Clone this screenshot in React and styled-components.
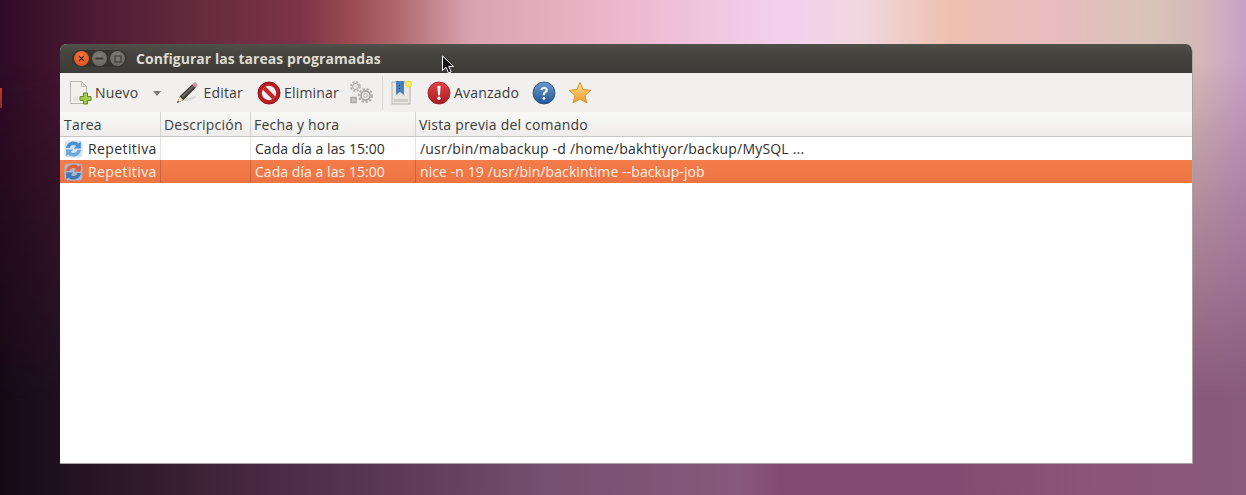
import React from "react";
import styled, { createGlobalStyle } from "styled-components";

const GlobalStyle = createGlobalStyle`
  html, body {
    margin: 0;
    padding: 0;
    height: 100%;
    overflow: hidden;
  }
  body {
    font-family: "Open Sans", "Noto Sans", sans-serif;
  }
`;

const Desktop = styled.div`
  position: relative;
  isolation: isolate;
  box-sizing: border-box;
  width: 1246px;
  height: 495px;
  padding: 44px 53px 31px 60px;
  overflow: hidden;
  background: linear-gradient(
    90deg,
    #160a14 0,
    #1f1020 60px,
    #3d2238 200px,
    #5c3a58 400px,
    #765070 550px,
    #88597c 740px,
    #824a72 780px,
    #824c72 950px,
    #8c5678 1100px,
    #885a7c 1246px
  );

  /* the lighter top of the wallpaper fades into the darker bottom */
  &::before {
    content: "";
    position: absolute;
    inset: 0;
    z-index: -1;
    background: linear-gradient(
      90deg,
      #2f0a26 0,
      #4f1c33 100px,
      #672b3e 200px,
      #7c3349 300px,
      #9a4a50 350px,
      #b06a70 400px,
      #d9a3b0 470px,
      #ecb5c8 600px,
      #f3d0ee 780px,
      #f0d8e0 860px,
      #eec0b0 950px,
      #e8bcc0 1050px,
      #d8c4b8 1150px,
      #d4b8b8 1200px,
      #c8a0c8 1246px
    );
    mask-image: linear-gradient(180deg, #000 60px, rgba(0, 0, 0, 0.55) 200px, transparent 400px);
  }
`;

const LeftSliver = styled.div`
  position: absolute;
  left: 0;
  top: 88px;
  width: 2px;
  height: 20px;
  background: linear-gradient(180deg, #c8381f, #8a2a2a);
`;

const Window = styled.div`
  display: flex;
  flex-direction: column;
  height: 100%;
  box-sizing: border-box;
  border-radius: 7px 7px 0 0;
  border-right: 1px solid #a8a5a3;
  border-bottom: 1px solid #a8a5a3;
  overflow: hidden;
  background: #ffffff;
`;

const TitleBar = styled.div`
  display: flex;
  align-items: center;
  flex: 0 0 29px;
  padding: 0 0 0 12px;
  background: linear-gradient(180deg, #514f49 0%, #45443e 35%, #3c3b37 100%);
`;

const WindowButtons = styled.div`
  display: flex;
  align-items: center;
  gap: 3px;
  padding: 1px 2px;
  border-radius: 9px;
  background: #35342f;
`;

const WinButton = styled.div`
  display: flex;
  align-items: center;
  justify-content: center;
  width: 15px;
  height: 15px;
  border-radius: 50%;
  background: ${(p) =>
    p.$close
      ? "radial-gradient(circle at 50% 35%, #f47a45, #dd4814)"
      : "radial-gradient(circle at 50% 35%, #7f7d76, #63615b)"};
`;

const Title = styled.span`
  margin-left: 9px;
  font-size: 14px;
  font-weight: 700;
  color: #dfdbd2;
  letter-spacing: 0.05px;
`;

const Toolbar = styled.div`
  display: flex;
  align-items: center;
  flex: 0 0 39px;
  padding-left: 9px;
  background: #f1f0ee;
`;

const ToolItem = styled.div`
  display: flex;
  align-items: center;
  flex: 0 0 auto;
  margin-left: ${(p) => p.$ml || 0}px;
  font-size: 14px;
  color: #3c3c3c;
`;

const ToolLabel = styled.span`
  margin-left: ${(p) => p.$ml || 2}px;
  letter-spacing: 0.2px;
`;

const Arrow = styled.div`
  width: 0;
  height: 0;
  margin-left: 15px;
  margin-top: 2px;
  border-left: 4.5px solid transparent;
  border-right: 4.5px solid transparent;
  border-top: 5px solid #7b7a76;
`;

const ToolSep = styled.div`
  width: 1px;
  height: 34px;
  margin-left: 8px;
  background: #dcdad6;
`;

const TableHead = styled.div`
  display: grid;
  grid-template-columns: 101px 90px 165px 1fr;
  flex: 0 0 25px;
  box-sizing: border-box;
  background: linear-gradient(180deg, #f8f8f7, #eeedeb);
  border-bottom: 1px solid #c9c7c3;
`;

const HeadCell = styled.div`
  display: flex;
  align-items: center;
  padding-left: 3px;
  font-size: 14px;
  color: #3c3c3c;
  letter-spacing: 0.2px;
  white-space: nowrap;
  border-right: 1px solid #d5d3cf;
  &:first-child {
    padding-left: 4px;
  }
  &:last-child {
    border-right: 0;
  }
`;

const Row = styled.div`
  display: grid;
  grid-template-columns: 101px 90px 165px 1fr;
  flex: 0 0 23px;
  background: ${(p) => (p.$selected ? "linear-gradient(180deg, #f47c4b, #ee7342)" : "#ffffff")};
  color: ${(p) => (p.$selected ? "#fdf0e8" : "#2e2e2e")};
`;

const Cell = styled.div`
  display: flex;
  align-items: center;
  padding-left: 4px;
  font-size: 14px;
  letter-spacing: ${(p) => p.$track ?? 0.2}px;
  white-space: nowrap;
  overflow: hidden;
  border-right: 1px solid ${(p) => (p.$selected ? "#c8653b" : "#e4e3e0")};
  &:last-child {
    border-right: 0;
  }
`;

const TaskName = styled.span`
  margin-left: 5px;
  letter-spacing: 0.4px;
`;

const Cursor = styled.svg`
  position: absolute;
  left: 441px;
  top: 55px;
`;

const CloseIcon = () => (
  <svg width="7" height="7" viewBox="0 0 7 7">
    <path d="M1 1l5 5M6 1L1 6" stroke="#4a2010" strokeWidth="1.1" />
  </svg>
);

const MinIcon = () => (
  <svg width="9" height="3" viewBox="0 0 9 3">
    <rect x="0.5" y="0.5" width="8" height="2" fill="#3e3d38" />
  </svg>
);

const MaxIcon = () => (
  <svg width="8" height="8" viewBox="0 0 8 8">
    <rect x="1" y="1" width="6" height="6" fill="none" stroke="#3e3d38" strokeWidth="1.2" />
  </svg>
);

const NewIcon = () => (
  <svg width="24" height="26" viewBox="0 0 24 26">
    <path d="M1.5 1.5h11l5 5v17h-16z" fill="#f1f0ec" stroke="#b9b8b2" />
    <path d="M12.5 1.5v5h5z" fill="#dcdbd6" stroke="#b9b8b2" />
    <path d="M4 17h5v4H4z" fill="#e3e2dd" />
    <path d="M14.5 13h4v3.5H22v4h-3.5V24h-4v-3.5H11v-4h3.5z" fill="#a4cc52" stroke="#5f8a1e" />
  </svg>
);

const PencilIcon = () => (
  <svg width="24" height="24" viewBox="0 0 24 24">
    <path d="M4 20l15-5 3 1-8 4z" fill="#cfcdc9" opacity="0.6" />
    <path d="M5 15L17.5 3l3.5 3.5L8.5 19 2 22z" fill="#3a3a38" />
    <path d="M6.5 15.5L18 4.5l1.2 1.2L8 16.5z" fill="#6a6a66" />
    <path d="M17 3.5l1.8-1.8c.7-.6 1.5-.6 2.1 0l1.2 1.3c.6.6.6 1.4 0 2L20.5 6.8z" fill="#d78fa4" />
    <path d="M4.8 15.6l3.4 3.4L2 22z" fill="#efe2ae" />
    <path d="M3 19.8l1.3 1.3L2 22z" fill="#2c2c2a" />
  </svg>
);

const StopIcon = () => (
  <svg width="24" height="24" viewBox="0 0 24 24">
    <circle cx="12" cy="12" r="11" fill="#b81e24" stroke="#8c1418" />
    <circle cx="12" cy="12" r="7.2" fill="#f3f1f0" />
    <path d="M5.5 8.5L8.5 5.5l10 10-3 3z" fill="#c4242a" />
  </svg>
);

const GearsIcon = () => (
  <svg width="26" height="26" viewBox="0 0 26 26" fill="none">
    <circle cx="7.5" cy="6.5" r="4.6" stroke="#b5b3af" strokeWidth="1.8" strokeDasharray="2.2 1.4" />
    <circle cx="7.5" cy="6.5" r="3" fill="#e6e5e2" stroke="#a5a3a0" />
    <circle cx="17.5" cy="15.5" r="6.6" stroke="#b5b3af" strokeWidth="2" strokeDasharray="2.4 1.6" />
    <circle cx="17.5" cy="15.5" r="4.6" fill="#e6e5e2" stroke="#a5a3a0" strokeWidth="1.6" />
    <circle cx="17.5" cy="15.5" r="1.8" fill="#f4f3f1" stroke="#b5b3af" />
    <rect x="3" y="17.5" width="5" height="5" fill="#c9c8c4" stroke="#a5a3a0" strokeWidth="1.4" />
  </svg>
);

const BookIcon = () => (
  <svg width="22" height="26" viewBox="0 0 22 26">
    <rect x="1" y="2" width="18" height="22" fill="#e9e8e3" stroke="#b4b3ac" />
    <rect x="3" y="19" width="14" height="3" fill="#cfcec8" />
    <path d="M5 1h8v14l-4-3-4 3z" fill="#4d7fb5" />
    <path d="M8 5h1v1H8zM8 8h1v1H8z" fill="#23466e" />
    <circle cx="17.5" cy="4" r="3" fill="#f5ee5e" stroke="#e4dc3c" />
  </svg>
);

const AlertIcon = () => (
  <svg width="24" height="24" viewBox="0 0 24 24">
    <defs>
      <linearGradient id="alertFill" x1="0" y1="0" x2="0" y2="1">
        <stop offset="0" stopColor="#e2464a" />
        <stop offset="1" stopColor="#a81a20" />
      </linearGradient>
    </defs>
    <circle cx="12" cy="12" r="11" fill="url(#alertFill)" stroke="#951a1e" strokeWidth="0.8" />
    <path d="M10.4 5h3.2l-.6 9.2h-2z" fill="#ffffff" />
    <circle cx="12" cy="17.2" r="1.7" fill="#ffffff" />
  </svg>
);

const HelpIcon = () => (
  <svg width="24" height="24" viewBox="0 0 24 24">
    <defs>
      <linearGradient id="helpFill" x1="0" y1="0" x2="0" y2="1">
        <stop offset="0" stopColor="#6c9bd1" />
        <stop offset="1" stopColor="#24558f" />
      </linearGradient>
    </defs>
    <circle cx="12" cy="12" r="11" fill="url(#helpFill)" stroke="#1f4a80" strokeWidth="0.8" />
    <path
      d="M8.4 9c.3-2 1.8-3 3.7-3 2.2 0 3.7 1.2 3.7 3 0 1.4-.8 2.1-1.8 2.8-.9.6-1.2 1-1.2 2v.4h-2v-.7c0-1.4.6-2.1 1.6-2.8.8-.5 1.2-.9 1.2-1.6 0-.8-.6-1.3-1.5-1.3s-1.6.6-1.8 1.5z"
      fill="#ffffff"
    />
    <circle cx="11.9" cy="17.4" r="1.4" fill="#ffffff" />
  </svg>
);

const StarIcon = () => (
  <svg width="24" height="24" viewBox="0 0 24 24">
    <defs>
      <linearGradient id="starFill" x1="0" y1="0" x2="0" y2="1">
        <stop offset="0" stopColor="#fde08a" />
        <stop offset="1" stopColor="#f29a2e" />
      </linearGradient>
    </defs>
    <path
      d="M12 1.5l3.2 7 7.5.8-5.6 5 1.6 7.5L12 18l-6.7 3.8 1.6-7.5-5.6-5 7.5-.8z"
      fill="url(#starFill)"
      stroke="#d9912c"
      strokeLinejoin="round"
    />
  </svg>
);

const RefreshIcon = ({ selected }) => (
  <svg width="19" height="18" viewBox="0 0 19 18">
    <rect x="0.5" y="0.5" width="18" height="17" rx="4" fill={selected ? "#a9b8cf" : "#d5e3f1"} />
    <path
      d="M2 8C2.8 3.8 5.8 1.5 9.5 1.5c2.2 0 4 .8 5.2 2L16.8 1.5v7h-7l2.4-2.4c-.7-.6-1.6-1-2.7-1-1.9 0-3.3 1-3.9 2.9z"
      fill={selected ? "#e0603c" : "#4a90d2"}
    />
    <path
      d="M17 10c-.8 4.2-3.8 6.5-7.5 6.5-2.2 0-4-.8-5.2-2l-2.1 2v-7h7l-2.4 2.4c.7.6 1.6 1 2.7 1 1.9 0 3.3-1 3.9-2.9z"
      fill={selected ? "#3f78b5" : "#6aa6de"}
    />
  </svg>
);

const rows = [
  { when: "Cada día a las 15:00", command: "/usr/bin/mabackup -d /home/bakhtiyor/backup/MySQL ...", track: 0.2 },
  { when: "Cada día a las 15:00", command: "nice -n 19 /usr/bin/backintime --backup-job", track: 0.09, selected: true },
];

export default function App() {
  return (
    <Desktop>
      <GlobalStyle />
      <LeftSliver />
      <Window>
        <TitleBar>
          <WindowButtons>
            <WinButton $close><CloseIcon /></WinButton>
            <WinButton><MinIcon /></WinButton>
            <WinButton><MaxIcon /></WinButton>
          </WindowButtons>
          <Title>Configurar las tareas programadas</Title>
        </TitleBar>
        <Toolbar>
          <ToolItem>
            <NewIcon />
            <ToolLabel>Nuevo</ToolLabel>
            <Arrow />
          </ToolItem>
          <ToolItem $ml={14}>
            <PencilIcon />
            <ToolLabel $ml={4}>Editar</ToolLabel>
          </ToolItem>
          <ToolItem $ml={14}>
            <StopIcon />
            <ToolLabel $ml={3}>Eliminar</ToolLabel>
          </ToolItem>
          <ToolItem $ml={9}>
            <GearsIcon />
          </ToolItem>
          <ToolSep />
          <ToolItem $ml={8}>
            <BookIcon />
          </ToolItem>
          <ToolItem $ml={14}>
            <AlertIcon />
            <ToolLabel $ml={3}>Avanzado</ToolLabel>
          </ToolItem>
          <ToolItem $ml={13}>
            <HelpIcon />
          </ToolItem>
          <ToolItem $ml={12}>
            <StarIcon />
          </ToolItem>
        </Toolbar>
        <TableHead>
          <HeadCell>Tarea</HeadCell>
          <HeadCell>Descripción</HeadCell>
          <HeadCell>Fecha y hora</HeadCell>
          <HeadCell>Vista previa del comando</HeadCell>
        </TableHead>
        {rows.map((row) => (
          <Row key={row.command} $selected={row.selected}>
            <Cell $selected={row.selected}>
              <RefreshIcon selected={row.selected} />
              <TaskName>Repetitiva</TaskName>
            </Cell>
            <Cell $selected={row.selected} />
            <Cell $selected={row.selected} $track={0.05}>{row.when}</Cell>
            <Cell $selected={row.selected} $track={row.track}>{row.command}</Cell>
          </Row>
        ))}
      </Window>
      <Cursor width="14" height="20" viewBox="0 0 14 20">
        <path d="M1.5 1v14.5l3.6-3.2 2.5 5.7 2.6-1.1-2.5-5.5h4.8z" fill="#111" stroke="#fff" strokeWidth="1" />
      </Cursor>
    </Desktop>
  );
}
